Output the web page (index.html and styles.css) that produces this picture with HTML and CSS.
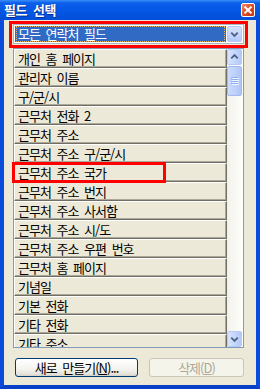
FILE: index.html
```html
<!DOCTYPE html>
<html lang="ko">
<head>
    <meta charset="UTF-8">
    <title>필드 선택</title>
    <link rel="stylesheet" href="styles.css">
</head>
<body>
    <div class="window">
        <!-- 제목 표시줄 -->
        <div class="titlebar">
            <span class="title">필드 선택</span>
            <span class="close">
                <svg width="13" height="13" viewBox="0 0 13 13">
                    <path d="M3.5 3.5 L9.5 9.5 M9.5 3.5 L3.5 9.5" stroke="#fff" stroke-width="2" stroke-linecap="square"/>
                </svg>
            </span>
        </div>

        <div class="frame">
            <!-- 콤보 상자 -->
            <div class="combo-mark">
                <div class="combo">
                    <div class="combo-field"><span class="focus">모든 연락처 필드</span></div>
                    <div class="combo-btn">
                        <svg width="14" height="14" viewBox="0 0 14 14">
                            <path d="M3.5 5.5 L7 9 L10.5 5.5" fill="none" stroke="#4D6185" stroke-width="2"/>
                        </svg>
                    </div>
                </div>
            </div>

            <!-- 필드 목록 -->
            <div class="listbox">
                <div class="items">
                    <div class="item">개인 홈 페이지</div>
                    <div class="item">관리자 이름</div>
                    <div class="item">구/군/시</div>
                    <div class="item">근무처 전화 2</div>
                    <div class="item">근무처 주소</div>
                    <div class="item">근무처 주소 구/군/시</div>
                    <div class="item">근무처 주소 국가</div>
                    <div class="item">근무처 주소 번지</div>
                    <div class="item">근무처 주소 사서함</div>
                    <div class="item">근무처 주소 시/도</div>
                    <div class="item">근무처 주소 우편 번호</div>
                    <div class="item">근무처 홈 페이지</div>
                    <div class="item">기념일</div>
                    <div class="item">기본 전화</div>
                    <div class="item">기타 전화</div>
                    <div class="item">기타 주소</div>
                </div>
                <div class="scrollbar">
                    <div class="sb-btn">
                        <svg width="14" height="14" viewBox="0 0 14 14">
                            <path d="M3.5 8.5 L7 5 L10.5 8.5" fill="none" stroke="#4D6185" stroke-width="2"/>
                        </svg>
                    </div>
                    <div class="sb-thumb">
                        <svg width="8" height="8" viewBox="0 0 8 8">
                            <path d="M0 0.5 H7 M0 2.5 H7 M0 4.5 H7 M0 6.5 H7" stroke="#8CB0F8" stroke-width="1"/>
                            <path d="M1 1.5 H8 M1 3.5 H8 M1 5.5 H8 M1 7.5 H8" stroke="#EEF4FE" stroke-width="1"/>
                        </svg>
                    </div>
                    <div class="sb-track"></div>
                    <div class="sb-btn">
                        <svg width="14" height="14" viewBox="0 0 14 14">
                            <path d="M3.5 5.5 L7 9 L10.5 5.5" fill="none" stroke="#4D6185" stroke-width="2"/>
                        </svg>
                    </div>
                </div>
                <!-- 강조 표시 -->
                <div class="item-mark"></div>
            </div>

            <!-- 버튼 -->
            <div class="buttons">
                <button class="btn btn-new">새로 만들기(<u>N</u>)...</button>
                <button class="btn btn-del" disabled>삭제(<u>D</u>)</button>
            </div>
        </div>
    </div>
</body>
</html>
```

FILE: styles.css
```css
body {
    margin: 0;
    background-color: #ECE9D8;
    font-family: "Noto Sans CJK KR", "Noto Sans", sans-serif;
    font-size: 13px;
    letter-spacing: -1px;
    word-spacing: 3px;
}

.window {
    width: 260px;
    height: 389px;
}

.titlebar {
    height: 20px;
    display: flex;
    align-items: center;
    justify-content: space-between;
    padding: 0 5px 0 4px;
    background: linear-gradient(#3A8DF8 0, #0A5FEA 3px, #0557E6 50%, #024ED8 100%);
    box-sizing: border-box;
}

.title {
    color: #FFFFFF;
    font-weight: bold;
    font-size: 13px;
    letter-spacing: -0.5px;
    line-height: 20px;
    text-shadow: 1px 1px #0A2E8C;
}

.close {
    width: 14px;
    height: 14px;
    display: flex;
    border: 1px solid #FFFFFF;
    border-radius: 2px;
    box-sizing: border-box;
    background: linear-gradient(135deg, #F08A6A, #D9461E 60%, #C3371A);
    align-items: center;
    justify-content: center;
}

.close svg {
    width: 12px;
    height: 12px;
}

.frame {
    height: 369px;
    box-sizing: border-box;
    border-left: 4px solid #0A4BDB;
    border-right: 4px solid #0A4BDB;
    border-bottom: 4px solid #0A3FC8;
    background-color: #ECE9D8;
    display: flex;
    flex-direction: column;
}

.combo-mark {
    margin: 1px 8px 0 5px;
    border: 3px solid #FF0000;
    height: 27px;
    box-sizing: border-box;
    padding: 0 1px 1px 1px;
}

.combo {
    height: 20px;
    display: flex;
    border: 1px solid #A9B8C9;
    background-color: #FFFFFF;
    padding: 1px;
    box-sizing: border-box;
    gap: 1px;
}

.combo-field {
    flex: 1;
    background-color: #316AC5;
    color: #FFFFFF;
    padding: 0 1px;
    display: flex;
}

.focus {
    flex: 1;
    border: 1px dotted #E7B563;
    line-height: 14px;
    padding-left: 1px;
}

.combo-btn {
    width: 15px;
    display: flex;
    align-items: center;
    justify-content: center;
    border: 1px solid #B7C9F2;
    border-radius: 2px;
    background: linear-gradient(#D7E3FE, #C3D4FB 60%, #B4C8F7);
    box-sizing: border-box;
}

.listbox {
    position: relative;
    margin-left: 9px;
    width: 231px;
    height: 300px;
    border: 1px solid #7F9DB9;
    box-sizing: border-box;
    display: flex;
}

.items {
    flex: 1;
    overflow: hidden;
    background-color: #ECE9D8;
}

.item {
    height: 19px;
    box-sizing: border-box;
    border-top: 1px solid #FFFFFF;
    border-left: 1px solid #FFFFFF;
    border-right: 1px solid #716F64;
    border-bottom: 1px solid #716F64;
    box-shadow: inset -1px -1px #ACA899;
    padding-left: 3px;
    line-height: 17px;
    color: #000000;
    white-space: nowrap;
}

.scrollbar {
    width: 16px;
    display: flex;
    flex-direction: column;
    background: linear-gradient(90deg, #F3F1EB, #FEFEFB);
    padding: 0 1px 0 0;
    box-sizing: border-box;
}

.sb-btn {
    height: 16px;
    display: flex;
    align-items: center;
    justify-content: center;
    border: 1px solid #B7C9F2;
    border-radius: 2px;
    background: linear-gradient(90deg, #D7E3FE, #C3D4FB 60%, #B4C8F7);
    box-sizing: border-box;
}

.sb-thumb {
    height: 30px;
    margin-top: 1px;
    display: flex;
    align-items: center;
    justify-content: center;
    border: 1px solid #A3BAF0;
    border-radius: 2px;
    background: linear-gradient(90deg, #CCDBFE, #BCD0FA 60%, #AFC5F6);
    box-sizing: border-box;
}

.sb-track {
    flex: 1;
}

.item-mark {
    position: absolute;
    left: -2px;
    top: 113px;
    width: 154px;
    height: 21px;
    border: 3px solid #FF0000;
    box-sizing: border-box;
}

.buttons {
    display: flex;
    gap: 11px;
    margin: 10px 0 0 11px;
}

.btn {
    height: 19px;
    padding: 0;
    font-family: "Noto Sans CJK KR", "Noto Sans", sans-serif;
    font-size: 13px;
    letter-spacing: -1px;
    word-spacing: 3px;
    line-height: 15px;
    border-radius: 3px;
    box-sizing: border-box;
}

.btn-new {
    width: 123px;
    border: 1px solid #003C74;
    color: #000000;
    background: linear-gradient(#FFFFFF, #F4F3EE 60%, #E3E1D8 90%, #D6D0C5);
}

.btn-del {
    width: 95px;
    border: 1px solid #C9C7BA;
    color: #ACA899;
    background-color: #F5F4EA;
}
```
